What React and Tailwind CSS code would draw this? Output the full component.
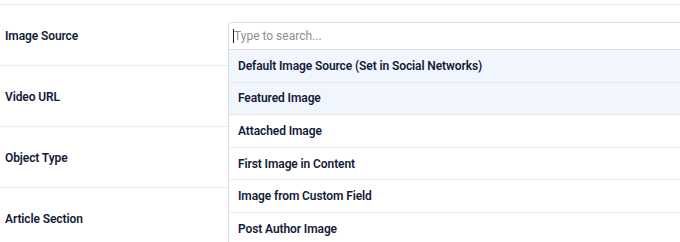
import { useState } from 'react';

const rows = ['Image Source', 'Video URL', 'Object Type', 'Article Section'];

const options = [
  'Default Image Source (Set in Social Networks)',
  'Featured Image',
  'Attached Image',
  'First Image in Content',
  'Image from Custom Field',
  'Post Author Image',
  'First Available Image',
];

export default function App() {
  const [query, setQuery] = useState('');

  return (
    <div
      className="w-[680px] h-[242px] overflow-hidden bg-white text-[#141b38]"
      style={{ fontFamily: 'Roboto, "Noto Sans", sans-serif' }}
    >
      <div className="mt-[4px] border-t border-[#ececef]">
        {rows.map((label, i) => (
          <div key={label} className="flex h-[61px] border-b border-[#ececef]">
            <div className="w-[228px] shrink-0 pl-[5px] pt-[2px] flex items-center text-[12px] font-semibold tracking-[-0.1px]">
              {label}
            </div>
            <div className="flex-1 relative">
              {i === 0 ? (
                <div className="absolute left-0 top-[17px] w-[480px] z-10 bg-white">
                  <div className="relative">
                    <input
                      value={query}
                      onChange={(e) => setQuery(e.target.value)}
                      placeholder="Type to search..."
                      className="w-full h-[28px] pl-[5px] border border-[#dcdcde] rounded-tl-[3px] text-[12px] text-[#141b38] placeholder:text-[#8c8f94] outline-none bg-white"
                    />
                    {query === '' ? (
                      <span className="absolute left-[5px] top-[7px] w-px h-[14px] bg-[#141b38]" />
                    ) : null}
                  </div>
                  <ul className="border-l border-[#dcdcde] bg-white -mt-px">
                    {options
                      .filter((o) => o.toLowerCase().includes(query.toLowerCase()))
                      .map((o, j) => (
                        <li
                          key={o}
                          className={`h-[32.6px] flex items-center pl-[9px] border-t border-[#e8e8eb] text-[12px] font-semibold tracking-[-0.1px] ${
                            j < 2 ? 'bg-[#f1f6fe]' : 'bg-white'
                          }`}
                        >
                          {o}
                        </li>
                      ))}
                  </ul>
                </div>
              ) : null}
            </div>
          </div>
        ))}
      </div>
    </div>
  );
}
